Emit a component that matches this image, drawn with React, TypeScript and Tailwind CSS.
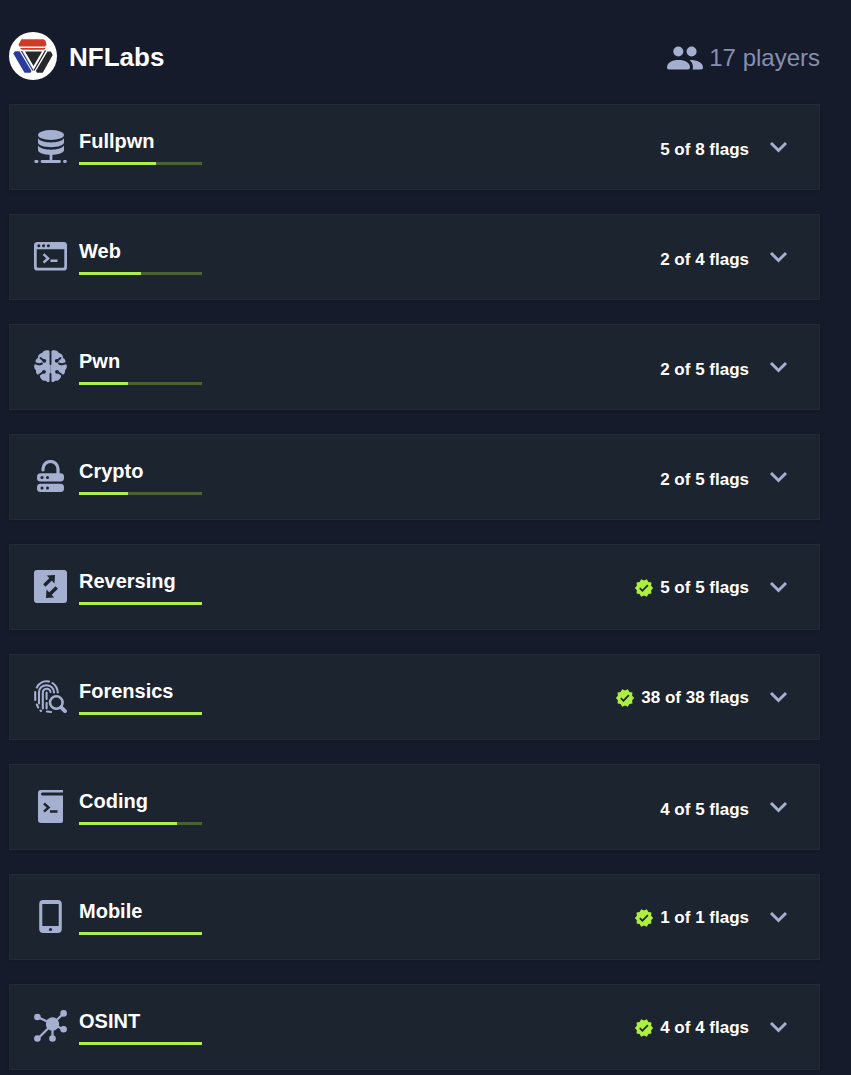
import { useState } from "react";
import type { ReactNode } from "react";
import clsx from "clsx";
import { MdVerified } from "react-icons/md";

type Category = {
  name: string;
  solved: number;
  total: number;
  icon: ReactNode;
};

function Icon({ children }: { children: ReactNode }) {
  return (
    <svg viewBox="0 0 33 33" className="mt-[3px] size-[33px] shrink-0 text-[#a5afcf]" fill="currentColor" aria-hidden="true">
      {children}
    </svg>
  );
}

function DatabaseIcon() {
  return (
    <Icon>
      <ellipse cx="17" cy="5" rx="13" ry="5" />
      <path d="M4 8.300c2 3 7.300 4.100 13 4.100s11-1.100 13-4.100v4.200c0 2.700-5.800 4.700-13 4.700S4 15.200 4 12.500z" />
      <path d="M4 15.600c2 3 7.300 4.100 13 4.100s11-1.100 13-4.100v4.400c0 2.700-5.800 4.900-13 4.900S4 22.700 4 20z" />
      <path d="M17 24v6M8 31.500h17.500M1.700 31.500h1.400M30.500 31.500h.9" stroke="currentColor" strokeWidth="2.800" strokeLinecap="round" />
    </Icon>
  );
}

function TerminalIcon() {
  return (
    <Icon>
      <path
        fillRule="evenodd"
        d="M3.500 2h26A3.400 3.400 0 0 1 33 5.400v21.800a3.400 3.400 0 0 1-3.500 3.400h-26A3.400 3.400 0 0 1 0 27.200V5.400A3.400 3.400 0 0 1 3.500 2zM2.700 9.200v17.200q0 1.400 1.400 1.400h24.800q1.400 0 1.400-1.400V9.200z"
      />
      <g fill="#1c2430">
        <circle cx="4.800" cy="5.800" r="1.500" />
        <circle cx="9.600" cy="5.800" r="1.500" />
        <circle cx="14.400" cy="5.800" r="1.500" />
      </g>
      <path d="M9.500 14.200l4.600 4.200-4.600 4.200M16.500 20.800h7" fill="none" stroke="currentColor" strokeWidth="2.500" />
    </Icon>
  );
}

function BrainIcon() {
  return (
    <Icon>
      <path d="M16.500 1.500C14.500-.500 9.500-.500 8.200 3 5.500 3.500 3.600 5.500 4 8c-2 .8-3 3-2.300 5C-.500 15-.300 18.800 2 20.300c-.300 3 1.200 4.800 3.800 5.200.4 3.600 3 5.800 6 5.200 1.400 1.800 3.700 1.500 4.700.300z" />
      <path d="M16.500 1.500C18.500-.500 23.500-.500 24.800 3 27.500 3.500 29.400 5.500 29 8c2 .8 3 3 2.300 5 2.200 2 2 5.800-.300 7.300.3 3-1.200 4.800-3.800 5.200-.4 3.600-3 5.800-6 5.200-1.400 1.800-3.700 1.500-4.700.300z" />
      <g fill="none" stroke="#1c2430" strokeWidth="1.900" strokeLinecap="round">
        <path d="M16.500 0v14M16.500 24v9" />
        <path d="M6.500 8l3 2.500M0 13l5.500 1.500 2.500-1M5 25l4.500-3" />
        <path d="M26.500 8l-3 2.500M33 13l-5.500 1.500-2.500-1M28 25l-4.500-3" />
      </g>
      <g fill="#1c2430">
        <circle cx="10.300" cy="10.800" r="1.900" />
        <circle cx="22.700" cy="10.800" r="1.900" />
        <circle cx="10" cy="21.800" r="1.900" />
        <circle cx="23" cy="21.800" r="1.900" />
      </g>
    </Icon>
  );
}

function UnlockServerIcon() {
  return (
    <Icon>
      <path d="M9 10v-1a7.500 7.500 0 0 1 15 0V15" fill="none" stroke="currentColor" strokeWidth="3.200" strokeLinecap="round" />
      <rect x="3" y="13.300" width="27" height="8.200" rx="3.500" />
      <rect x="3" y="23.800" width="27" height="8.200" rx="3.500" />
      <g fill="#1c2430">
        <circle cx="8" cy="17.400" r="1.500" />
        <circle cx="13.500" cy="17.400" r="1.500" />
        <circle cx="8" cy="27.900" r="1.500" />
        <circle cx="13.500" cy="27.900" r="1.500" />
      </g>
    </Icon>
  );
}

function ReversingIcon() {
  return (
    <Icon>
      <rect width="33" height="33" rx="3" />
      <path d="M12.800 5.500L21 5l-.500 8.500z M12 28l.500-8.500 7.700 8z" fill="#1c2430" />
      <path d="M10.300 15.500L18.500 7.500M22.700 17.500L14.500 25.500" stroke="#1c2430" strokeWidth="3.400" />
    </Icon>
  );
}

function FingerprintIcon() {
  return (
    <Icon>
      <g fill="none" stroke="currentColor" strokeWidth="2.100" strokeLinecap="round">
        <path d="M2.800 7.500C5.500 2.500 10.500.500 15 1.500M18.500 3C21.500 5 23.500 8.500 23.800 12.500" />
        <path d="M1.200 12v8M2.800 24.500l1.400 3" />
        <path d="M5 23.500V12.500C5 2.800 19.800 2.800 20 12.500" />
        <path d="M8.800 28.500V13c0-5.500 7.500-5.500 7.700-1" />
        <path d="M12.600 12.500v6.500M12.600 23v5.500M7 31l-.500-.500M13 31.500l4 .500" />
      </g>
      <circle cx="22.300" cy="22.500" r="6.300" fill="none" stroke="currentColor" strokeWidth="2.600" />
      <path d="M27.200 27.400l3.800 3.800" stroke="currentColor" strokeWidth="3.800" strokeLinecap="round" />
    </Icon>
  );
}

function CodeBookIcon() {
  return (
    <Icon>
      <path d="M7 0h22v2.400H8.500a1.200 1.200 0 0 0 0 3H29V31q0 2-2 2H7q-3 0-3-3V3q0-3 3-3z" />
      <path d="M10 13.500l4.500 4.100-4.500 4.100M16 21.500h7.500" fill="none" stroke="#1c2430" strokeWidth="2.500" />
    </Icon>
  );
}

function PhoneIcon() {
  return (
    <Icon>
      <path
        fillRule="evenodd"
        d="M9.200 0h14.600a4 4 0 0 1 4 4v25a4 4 0 0 1-4 4H9.200a4 4 0 0 1-4-4V4a4 4 0 0 1 4-4zM8.300 4v22h16.400V4z"
      />
      <circle cx="16.500" cy="29.500" r="1.600" fill="#1c2430" />
    </Icon>
  );
}

function NetworkIcon() {
  return (
    <Icon>
      <path d="M18.500 14L3.500 7M18.500 14L29.500 3.500M18.500 14l11 5.500M18.500 14v15M18.500 14L3.500 29" stroke="currentColor" strokeWidth="2.200" />
      <circle cx="18.500" cy="14" r="6.700" />
      <circle cx="3.400" cy="7" r="3.300" />
      <circle cx="29.600" cy="3.400" r="3.300" />
      <circle cx="29.600" cy="19.300" r="3.300" />
      <circle cx="18.500" cy="28.500" r="3.300" />
      <circle cx="3.400" cy="28.500" r="3.300" />
    </Icon>
  );
}

function PlayersIcon() {
  return (
    <svg viewBox="0 0 36 24" className="h-6 w-9 text-[#a5afcf]" fill="currentColor" aria-hidden="true">
      <circle cx="11.300" cy="5.500" r="5" />
      <circle cx="24.600" cy="5.500" r="5" />
      <path d="M0 21.500c0-5 5-7.500 11.500-7.500S23 16.500 23 21.500q0 2-2 2H2q-2 0-2-2z" />
      <path d="M22.500 14c8 0 13.500 2.500 13.500 7.500q0 2-2 2h-8.700q.7-1 .7-2c0-3.500-1.300-5.700-3.500-7.500z" />
    </svg>
  );
}

function ChevronIcon({ open }: { open: boolean }) {
  return (
    <svg viewBox="0 0 34 34" className={clsx("size-[34px] text-[#a5afcf]", open && "rotate-180")} fill="none" aria-hidden="true">
      <path d="M10 13l7.500 7.500L25 13" stroke="currentColor" strokeWidth="3" />
    </svg>
  );
}

function TeamLogo() {
  return (
    <svg viewBox="0 0 48 48" className="size-12" role="img" aria-label="NFLabs logo">
      <circle cx="24" cy="24" r="24" fill="#fff" />
      <path d="M12.500 7.200h22l2 1.500 1 4-1.500 1.800H10.500l-1-2z" fill="#d03b28" />
      <path d="M11 16h25.500l-1.200 1.800H13z" fill="#d03b28" />
      <path d="M4.300 21.500l1.700-2.300h4.500L22.500 39l-1 1.800h-6z" fill="#2a3c9b" />
      <path d="M12.500 19L24 38.500" stroke="#2a3c9b" strokeWidth="1.300" />
      <path d="M16 19.500h17L24.500 34z" fill="#25272b" />
      <path d="M38.500 19.500h3.300l1.900 3.500-10 17.800H28L26.800 39z" fill="#25272b" />
      <path d="M36.500 18.500L25 38.500" stroke="#25272b" strokeWidth="1.300" />
    </svg>
  );
}

const categories: Category[] = [
  { name: "Fullpwn", solved: 5, total: 8, icon: <DatabaseIcon /> },
  { name: "Web", solved: 2, total: 4, icon: <TerminalIcon /> },
  { name: "Pwn", solved: 2, total: 5, icon: <BrainIcon /> },
  { name: "Crypto", solved: 2, total: 5, icon: <UnlockServerIcon /> },
  { name: "Reversing", solved: 5, total: 5, icon: <ReversingIcon /> },
  { name: "Forensics", solved: 38, total: 38, icon: <FingerprintIcon /> },
  { name: "Coding", solved: 4, total: 5, icon: <CodeBookIcon /> },
  { name: "Mobile", solved: 1, total: 1, icon: <PhoneIcon /> },
  { name: "OSINT", solved: 4, total: 4, icon: <NetworkIcon /> },
];

function CategoryCard({ name, solved, total, icon }: Category) {
  const [open, setOpen] = useState(false);
  const complete = solved === total;

  return (
    <li className="flex items-center justify-between border border-[#222a37] bg-[#1c2430] px-6 py-[22px] shadow-sm">
      <div className="flex items-start gap-3">
        {icon}
        <div>
          <h2 className="text-xl leading-7 font-bold">{name}</h2>
          <div
            role="progressbar"
            aria-label={name}
            aria-valuenow={solved}
            aria-valuemax={total}
            className="mt-[7px] mb-[2px] h-[3px] w-[123px] bg-[#4a6135]"
          >
            <div className="h-full bg-[#b0ec4c]" style={{ width: `${(solved / total) * 100}%` }} />
          </div>
        </div>
      </div>

      <div className="flex items-center gap-3">
        <div className={clsx("flex items-center gap-1.5", complete ? "pt-0.5" : "pt-1.5")}>
          {complete && <MdVerified className="size-5 text-[#adef3c]" />}
          <p className="text-[17px] leading-6 font-bold">
            {solved} of {total} flags
          </p>
        </div>
        <button type="button" aria-label={`Show ${name}`} aria-expanded={open} onClick={() => setOpen(!open)}>
          <ChevronIcon open={open} />
        </button>
      </div>
    </li>
  );
}

export default function App() {
  return (
    <main className="min-h-screen bg-[#151b2a] pt-8 pr-[31px] pb-1 pl-[9px] font-['Liberation_Sans',sans-serif] text-white">
      <header className="mb-6 flex items-center justify-between">
        <div className="flex items-center gap-3">
          <TeamLogo />
          <h1 className="pt-0.5 text-[26px] leading-8 font-bold">NFLabs</h1>
        </div>
        <div className="flex items-center gap-1.5 pt-1">
          <PlayersIcon />
          <p className="text-2xl text-[#878fb0]">17 players</p>
        </div>
      </header>

      <ul className="flex flex-col gap-6">
        {categories.map((category) => (
          <CategoryCard key={category.name} {...category} />
        ))}
      </ul>
    </main>
  );
}
